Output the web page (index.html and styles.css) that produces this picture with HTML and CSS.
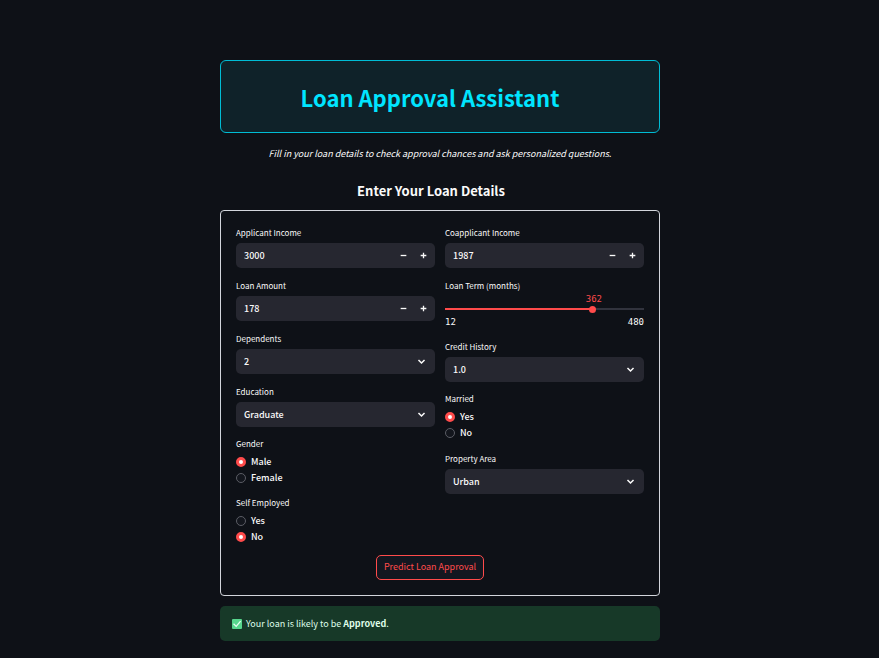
FILE: index.html
```html
<!DOCTYPE html>
<html lang="en">
<head>
<meta charset="utf-8">
<meta name="viewport" content="width=device-width, initial-scale=1">
<title>Loan Approval Assistant</title>
<link rel="stylesheet" href="styles.css">
</head>
<body>
<main class="page">
  <header class="banner"><h1>Loan Approval Assistant</h1></header>
  <p class="intro">Fill in your loan details to check approval chances and ask personalized questions.</p>
  <h2 class="section-title">Enter Your Loan Details</h2>

  <form class="form">
    <div class="columns">
      <div class="column">
        <div class="field">
          <label class="label" for="income">Applicant Income</label>
          <div class="control">
            <input id="income" type="number" value="3000">
            <button class="step" type="button" aria-label="Decrease applicant income"><svg viewBox="0 0 8 8"><path d="M1.5 4h5"/></svg></button>
            <button class="step" type="button" aria-label="Increase applicant income"><svg viewBox="0 0 8 8"><path d="M1.5 4h5M4 1.5v5"/></svg></button>
          </div>
        </div>
        <div class="field">
          <label class="label" for="amount">Loan Amount</label>
          <div class="control">
            <input id="amount" type="number" value="178">
            <button class="step" type="button" aria-label="Decrease loan amount"><svg viewBox="0 0 8 8"><path d="M1.5 4h5"/></svg></button>
            <button class="step" type="button" aria-label="Increase loan amount"><svg viewBox="0 0 8 8"><path d="M1.5 4h5M4 1.5v5"/></svg></button>
          </div>
        </div>
        <div class="field">
          <label class="label" for="dependents">Dependents</label>
          <div class="control">
            <select id="dependents"><option>0</option><option>1</option><option selected>2</option><option>3+</option></select>
            <svg class="chevron" viewBox="0 0 9 9"><path d="M2 3.5l2.5 2.5 2.5-2.5"/></svg>
          </div>
        </div>
        <div class="field">
          <label class="label" for="education">Education</label>
          <div class="control">
            <select id="education"><option>Graduate</option><option>Not Graduate</option></select>
            <svg class="chevron" viewBox="0 0 9 9"><path d="M2 3.5l2.5 2.5 2.5-2.5"/></svg>
          </div>
        </div>
        <fieldset class="field choices">
          <legend class="label">Gender</legend>
          <label class="choice"><input type="radio" name="gender" checked>Male</label>
          <label class="choice"><input type="radio" name="gender">Female</label>
        </fieldset>
        <fieldset class="field choices">
          <legend class="label">Self Employed</legend>
          <label class="choice"><input type="radio" name="self-employed">Yes</label>
          <label class="choice"><input type="radio" name="self-employed" checked>No</label>
        </fieldset>
      </div>

      <div class="column">
        <div class="field">
          <label class="label" for="coincome">Coapplicant Income</label>
          <div class="control">
            <input id="coincome" type="number" value="1987">
            <button class="step" type="button" aria-label="Decrease coapplicant income"><svg viewBox="0 0 8 8"><path d="M1.5 4h5"/></svg></button>
            <button class="step" type="button" aria-label="Increase coapplicant income"><svg viewBox="0 0 8 8"><path d="M1.5 4h5M4 1.5v5"/></svg></button>
          </div>
        </div>
        <div class="field">
          <label class="label" for="term">Loan Term (months)</label>
          <div class="slider" style="--value: 74.8%">
            <output class="slider-value" for="term">362</output>
            <input id="term" type="range" min="12" max="480" value="362">
            <div class="slider-range"><span>12</span><span>480</span></div>
          </div>
        </div>
        <div class="field">
          <label class="label" for="credit">Credit History</label>
          <div class="control">
            <select id="credit"><option>1.0</option><option>0.0</option></select>
            <svg class="chevron" viewBox="0 0 9 9"><path d="M2 3.5l2.5 2.5 2.5-2.5"/></svg>
          </div>
        </div>
        <fieldset class="field choices">
          <legend class="label">Married</legend>
          <label class="choice"><input type="radio" name="married" checked>Yes</label>
          <label class="choice"><input type="radio" name="married">No</label>
        </fieldset>
        <div class="field">
          <label class="label" for="area">Property Area</label>
          <div class="control">
            <select id="area"><option>Urban</option><option>Semiurban</option><option>Rural</option></select>
            <svg class="chevron" viewBox="0 0 9 9"><path d="M2 3.5l2.5 2.5 2.5-2.5"/></svg>
          </div>
        </div>
      </div>
    </div>
    <div class="actions"><button class="submit" type="submit">Predict Loan Approval</button></div>
  </form>

  <div class="alert" role="status">
    <svg class="check" viewBox="0 0 10 10"><rect width="10" height="10" rx="1" fill="#57d68d"/><path d="M2 5.2l2.2 2.2L8.2 2.6" fill="none" stroke="#e8fff2" stroke-width="1.3"/></svg>
    <p>Your loan is likely to be <strong>Approved</strong>.</p>
  </div>
</main>
</body>
</html>
```
FILE: styles.css
```css
* { box-sizing: border-box; }

body {
  margin: 0;
  padding-left: 1px;
  background: #0e1117;
  color: #fafafa;
  font: 400 9px/16px "Noto Sans CJK SC", "Noto Sans", sans-serif;
}

h1, h2, p { margin: 0; }

input, select, button { font: inherit; color: inherit; }

.page {
  max-width: 440px;
  margin: 0 auto;
  padding: 60px 0 16px;
}

.banner {
  padding: 21px 20px 19px;
  border: 1px solid #00bcd4;
  border-radius: 6px;
  background: #0f2229;
  text-align: center;
}

.banner h1 {
  color: #00e5ff;
  font-size: 22px;
  font-weight: 700;
  line-height: 31px;
  padding-right: 20px;
}

.intro {
  margin-top: 13px;
  text-align: center;
  font-style: italic;
}

.section-title {
  margin: 18px 0 8px;
  padding-right: 18px;
  font-size: 13px;
  line-height: 22px;
  text-align: center;
}

.form {
  padding: 15px;
  border: 1px solid #d3d6dc;
  border-radius: 4px;
}

.columns {
  display: grid;
  grid-template-columns: 1fr 1fr;
  gap: 10px;
}

.column {
  display: flex;
  flex-direction: column;
  gap: 11px;
  min-width: 0;
}

.field {
  min-width: 0;
  margin: 0;
  padding: 0;
  border: 0;
}

.choices { margin-top: -1px; }

.label {
  display: block;
  height: 17px;
  padding: 0;
  font-size: 8px;
  line-height: 14px;
}

.control {
  position: relative;
  display: flex;
  align-items: center;
  height: 25px;
  border-radius: 5px;
  background: #262730;
}

.control input,
.control select {
  flex: 1;
  min-width: 0;
  height: 100%;
  padding: 0 8px;
  border: 0;
  background: transparent;
  font-weight: 500;
  appearance: none;
  outline: none;
}

.control input { appearance: textfield; }
.control input::-webkit-inner-spin-button { appearance: none; }
.control option { background: #262730; }

.step {
  display: flex;
  align-items: center;
  justify-content: center;
  width: 20px;
  height: 25px;
  padding: 0;
  border: 0;
  background: transparent;
}

.step:last-child { margin-right: 2px; }

.step svg { width: 7px; height: 7px; }

svg path { stroke-linecap: square; }

.step path,
.chevron path {
  fill: none;
  stroke: #fafafa;
  stroke-width: 1.5;
}

.chevron {
  position: absolute;
  right: 9px;
  width: 9px;
  height: 9px;
  pointer-events: none;
}

.choice {
  display: flex;
  align-items: center;
  gap: 5px;
  height: 16px;
  font-weight: 500;
}

.choice input {
  width: 10px;
  height: 10px;
  margin: 0;
  border: 1px solid #5b5d65;
  border-radius: 50%;
  background: #13161d;
  appearance: none;
}

.choice input:checked {
  border: 3px solid #ff4b4b;
  background: #ffffff;
}

.slider {
  position: relative;
  height: 33px;
  padding-top: 6px;
  font: 9px/12px "DejaVu Sans Mono", "Liberation Mono", monospace;
}

.slider-value {
  position: absolute;
  top: -3px;
  left: var(--value);
  transform: translateX(-50%);
  color: #ff4b4b;
}

.slider input {
  display: block;
  width: 100%;
  height: 14px;
  margin: 0;
  background: linear-gradient(to right, #ff4b4b var(--value), #31333d var(--value)) center / 100% 2px no-repeat;
  appearance: none;
}

.slider input::-webkit-slider-thumb {
  width: 7px;
  height: 7px;
  border-radius: 50%;
  background: #ff4b4b;
  appearance: none;
}

.slider-range {
  display: flex;
  justify-content: space-between;
}

.actions {
  display: flex;
  justify-content: center;
  margin-top: 10px;
  padding-right: 20px;
}

.submit {
  height: 25px;
  padding: 0 7px 1px;
  border: 1px solid #ff4b4b;
  border-radius: 5px;
  background: #131720;
  color: #ff4b4b;
}

.alert {
  display: flex;
  align-items: center;
  gap: 4px;
  min-height: 35px;
  margin-top: 10px;
  padding: 8px 12px;
  border-radius: 5px;
  background: #173928;
  color: #dffde9;
}

.check {
  width: 10px;
  height: 10px;
}
```
